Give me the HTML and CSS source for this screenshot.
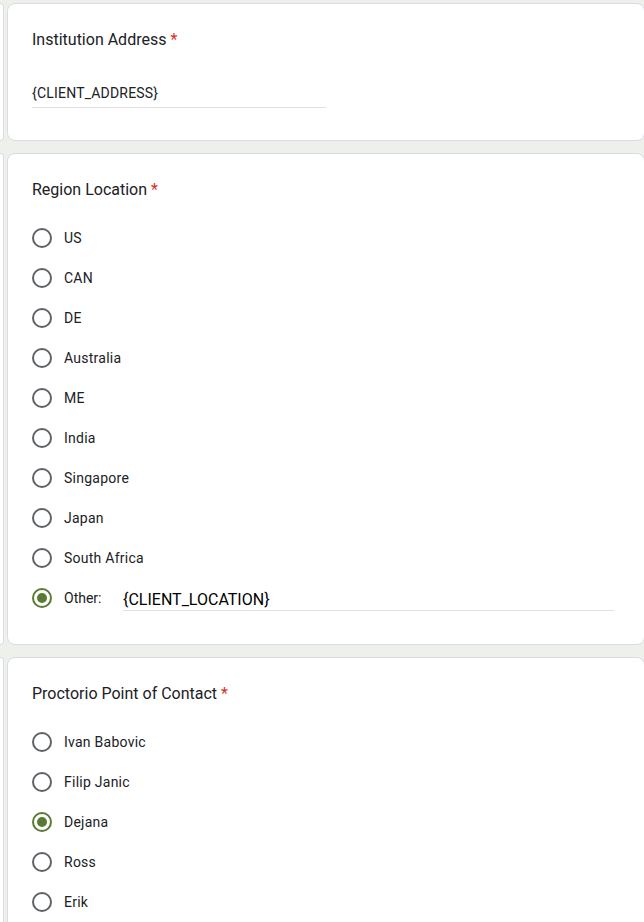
FILE: index.html
```html
<!DOCTYPE html>
<html>
<head>
<meta charset="utf-8">
<link rel="stylesheet" href="styles.css">
</head>
<body>
<div class="page">
  <div class="row">
    <div class="ghost"></div>
    <section class="card card-address">
      <div class="q-title">Institution Address <span class="req">*</span></div>
      <div class="text-field"><span>{CLIENT_ADDRESS}</span></div>
    </section>
  </div>

  <div class="row">
    <div class="ghost"></div>
    <section class="card card-list">
      <div class="q-title">Region Location <span class="req">*</span></div>
      <div class="options">
        <div class="option"><span class="radio"></span><span class="label">US</span></div>
        <div class="option"><span class="radio"></span><span class="label">CAN</span></div>
        <div class="option"><span class="radio"></span><span class="label">DE</span></div>
        <div class="option"><span class="radio"></span><span class="label">Australia</span></div>
        <div class="option"><span class="radio"></span><span class="label">ME</span></div>
        <div class="option"><span class="radio"></span><span class="label">India</span></div>
        <div class="option"><span class="radio"></span><span class="label">Singapore</span></div>
        <div class="option"><span class="radio"></span><span class="label">Japan</span></div>
        <div class="option"><span class="radio"></span><span class="label">South Africa</span></div>
        <div class="option"><span class="radio checked"></span><span class="label other-label">Other:</span><span class="other-input">{CLIENT_LOCATION}</span></div>
      </div>
    </section>
  </div>

  <div class="row">
    <div class="ghost"></div>
    <section class="card card-list">
      <div class="q-title">Proctorio Point of Contact <span class="req">*</span></div>
      <div class="options">
        <div class="option"><span class="radio"></span><span class="label">Ivan Babovic</span></div>
        <div class="option"><span class="radio"></span><span class="label">Filip Janic</span></div>
        <div class="option"><span class="radio checked"></span><span class="label">Dejana</span></div>
        <div class="option"><span class="radio"></span><span class="label">Ross</span></div>
        <div class="option"><span class="radio"></span><span class="label">Erik</span></div>
      </div>
    </section>
  </div>
</div>
</body>
</html>
```

FILE: styles.css
```css
html, body {
  margin: 0;
  padding: 0;
  background: #eef0eb;
  overflow: hidden;
}
body {
  font-family: Roboto, "Liberation Sans", Arial, sans-serif;
  color: #202124;
}
.page {
  display: flex;
  flex-direction: column;
  gap: 12px;
  padding-top: 3px;
}
.row {
  display: grid;
  grid-template-columns: 4px 1fr;
  column-gap: 3px;
}
.ghost {
  background: #fff;
  border: 1px solid #dadce0;
  border-left: none;
  border-radius: 0 6px 6px 0;
}
.card {
  background: #fff;
  border: 1px solid #dadce0;
  border-radius: 8px;
  padding: 24px;
  margin-right: -1px;
}
.card-address {
  padding-bottom: 32px;
}
.card-list {
  padding-bottom: 26px;
}
.q-title {
  font-size: 16px;
  line-height: 24px;
  letter-spacing: 0;
}
.req {
  color: #d93025;
}
.text-field {
  margin-top: 24px;
  width: 50%;
  height: 31px;
  border-bottom: 1px solid #e0e0e0;
  font-size: 14px;
  line-height: 20px;
  display: flex;
  align-items: center;
  letter-spacing: 0.2px;
}
.text-field span {
  padding-top: 3px;
}
.options {
  margin-top: 16px;
  display: flex;
  flex-direction: column;
}
.option {
  height: 40px;
  display: flex;
  align-items: center;
  font-size: 14px;
  letter-spacing: 0.25px;
}
.radio {
  width: 16px;
  height: 16px;
  border: 2px solid #5f6368;
  border-radius: 50%;
  flex: none;
  margin-right: 12px;
  position: relative;
}
.radio.checked {
  border-color: #5a7a34;
}
.radio.checked::after {
  content: "";
  position: absolute;
  left: 3px;
  top: 3px;
  width: 10px;
  height: 10px;
  border-radius: 50%;
  background: #5a7a34;
}
.other-label {
  font-size: 14px;
  letter-spacing: 0;
  width: 59px;
  flex: none;
}
.other-input {
  flex: 1;
  margin-right: 6px;
  font-size: 16px;
  line-height: 24px;
  color: #000;
  border-bottom: 1px solid #e0e0e0;
  padding-top: 12px;
  letter-spacing: 0;
  align-self: stretch;
  display: flex;
  align-items: center;
  box-sizing: border-box;
  height: 33px;
}
```
